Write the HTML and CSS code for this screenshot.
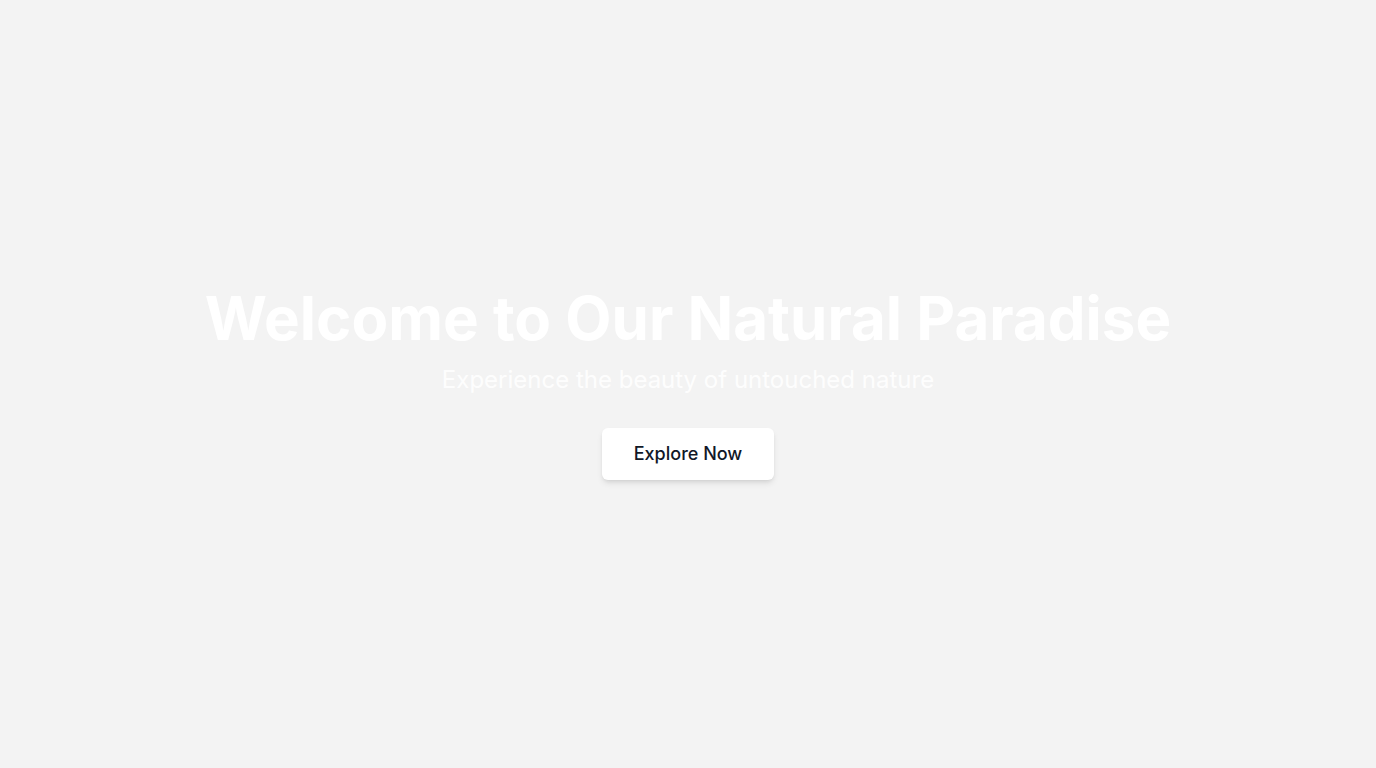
FILE: index.html
```html
<!DOCTYPE html>
<html lang="en">
<head>
<meta charset="utf-8">
<title>Natural Paradise</title>
<link rel="stylesheet" href="styles.css">
</head>
<body>
<section class="hero">
  <div class="hero-content">
    <h1 class="hero-title">Welcome to Our Natural Paradise</h1>
    <p class="hero-subtitle">Experience the beauty of untouched nature</p>
    <button class="hero-btn" type="button">Explore Now</button>
  </div>
</section>
</body>
</html>
```

FILE: styles.css
```css
* { box-sizing: border-box; }
html, body { margin: 0; padding: 0; }
body {
  font-family: Inter, "Noto Sans", sans-serif;
  background: #f3f3f3;
}
.hero {
  height: 768px;
  display: flex;
  align-items: center;
  justify-content: center;
  background: #f3f3f3;
}
.hero-content {
  display: flex;
  flex-direction: column;
  align-items: center;
  text-align: center;
}
.hero-title {
  margin: 0 0 16px;
  font-size: 60px;
  line-height: 60px;
  font-weight: 700;
  color: #ffffff;
}
.hero-subtitle {
  margin: 0 0 32px;
  font-size: 24px;
  line-height: 32px;
  font-weight: 400;
  color: rgba(255,255,255,0.9);
}
.hero-btn {
  font-family: inherit;
  font-size: 18px;
  line-height: 28px;
  font-weight: 500;
  color: #111827;
  background: #ffffff;
  border: none;
  border-radius: 6px;
  padding: 12px 32px;
  box-shadow: 0 4px 6px -1px rgba(0,0,0,0.1), 0 2px 4px -2px rgba(0,0,0,0.1);
  cursor: pointer;
}
```
